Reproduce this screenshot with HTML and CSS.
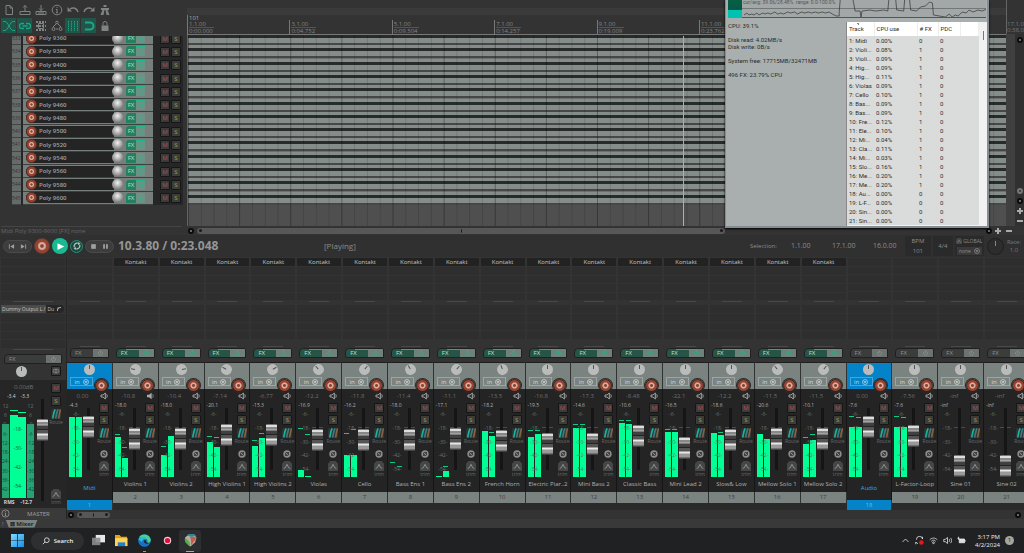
FILE: index.html
```html
<!DOCTYPE html>
<html lang="en">
<head>
<meta charset="utf-8">
<title>Mixer session</title>
<link rel="stylesheet" href="styles.css">
</head>
<body>
<svg class="defs" aria-hidden="true">
  <symbol id="i-new" viewBox="0 0 12 12"><path d="M3 1.5h4l2.5 2.500V10.500H3zM7 1.500V4h2.500"/></symbol>
  <symbol id="i-open" viewBox="0 0 12 12"><path d="M1 7.500h10v3H1zM6 7V1.500M4 3.500l2-2 2 2"/></symbol>
  <symbol id="i-save" viewBox="0 0 12 12"><path d="M1 7.500h10v3H1zM6 1v5.500M4 4.500l2 2 2-2M3 9h6"/></symbol>
  <symbol id="i-info" viewBox="0 0 12 12"><circle cx="6" cy="6" r="4.800"/><path d="M6 5.200v3.500M5 8.700h2M5 5.500h1M6 3v1"/></symbol>
  <symbol id="i-undo" viewBox="0 0 12 12"><path stroke-width="1.500" d="M3 5c3-2 7-1 8 3"/><path class="f" d="M.5 3v4.500H5z"/></symbol>
  <symbol id="i-redo" viewBox="0 0 12 12"><path stroke-width="1.500" d="M9 5c-3-2-7-1-8 3"/><path class="f" d="M11.500 3v4.500H7z"/></symbol>
  <symbol id="i-metro" viewBox="0 0 12 12"><path class="f" d="M4.500 1h3v2h-3zM2 4h8v2H2zM3.500 6h2L4.500 11h-3zM6.500 6h2l2 5h-3z"/></symbol>
  <symbol id="i-cross" viewBox="0 0 12 12"><path d="M0 1.500h2c3 0 5 9 8 9h2M0 10.500h2c3 0 5-9 8-9h2"/></symbol>
  <symbol id="i-link" viewBox="0 0 12 12"><path stroke-width="1.300" d="M5 3.500H3a2.500 2.500 0 000 5h2M7 3.500h2a2.500 2.500 0 010 5H7M3.500 6h5"/></symbol>
  <symbol id="i-group" viewBox="0 0 12 12"><path stroke-width="2" stroke-dasharray="2 1" d="M1 2h10M1 6h10M1 10h10"/><path d="M3.500 3.500h5v5h-5z"/></symbol>
  <symbol id="i-env" viewBox="0 0 12 12"><circle cx="6" cy="2.500" r="1.300"/><path d="M5 4L2 7M7 4l3 3"/><circle cx="2.500" cy="9" r="1.500"/><circle cx="9.500" cy="9" r="1.500"/><path d="M5 9h2"/></symbol>
  <symbol id="i-grid" viewBox="0 0 12 12"><path stroke-dasharray="1.500 .8" d="M1.500 1v10M4.500 1v10M7.500 1v10M10.500 1v10"/></symbol>
  <symbol id="i-snap" viewBox="0 0 12 12"><path stroke-width="2" d="M2 2.500h5a3.500 3.500 0 010 7H2"/></symbol>
  <symbol id="i-lock" viewBox="0 0 12 12"><path class="f" d="M2.500 5.500h7V11h-7z"/><path d="M4 5.500V3.500a2 2 0 014 0v2"/></symbol>
  <symbol id="i-prev" viewBox="0 0 12 12"><path class="f" d="M1.500 2H3v8H1.500zM10.500 2v8L4 6z"/></symbol>
  <symbol id="i-next" viewBox="0 0 12 12"><path class="f" d="M10.500 2H9v8h1.500zM1.500 2v8L8 6z"/></symbol>
  <symbol id="i-play" viewBox="0 0 12 12"><path class="f" d="M2 1.500l9 4.500-9 4.500z"/></symbol>
  <symbol id="i-loop" viewBox="0 0 12 12"><path stroke-width="1.800" d="M2.200 8A4.300 4.300 0 017 1.900M9.800 4A4.300 4.300 0 015 10.100"/><path class="f" d="M7 0l4 2-3 3zM5 12L1 10l3-3z"/></symbol>
  <symbol id="i-stop" viewBox="0 0 12 12"><path class="f" d="M2 2h8v8H2z"/></symbol>
  <symbol id="i-pause" viewBox="0 0 12 12"><path class="f" d="M2 2h3v8H2zM7 2h3v8H7z"/></symbol>
  <symbol id="i-power" viewBox="0 0 12 12"><path stroke-width="1.500" d="M4 3a4 4 0 104 0M6 1v5"/></symbol>
  <symbol id="i-down" viewBox="0 0 12 12"><circle stroke-width="1.500" cx="6" cy="6" r="5"/><path class="f" d="M3 4.500h6L6 9z"/></symbol>
  <symbol id="i-spk" viewBox="0 0 12 12"><path stroke-width="1.400" d="M1.500 4.500h3L8 1.500v9L4.500 7.500h-3zM10 3.500c1 1.500 1 3.500 0 5"/></symbol>
  <symbol id="i-spkon" viewBox="0 0 12 12"><path class="f" d="M1.500 4h3L8.500 1v10L4.500 8h-3z"/><path d="M10 3.500c1 1.500 1 3.500 0 5"/></symbol>
  <symbol id="i-route" viewBox="0 0 12 12"><path class="f dk" d="M1 0h11v12H0V2z"/><path class="r1" d="M2 11.500C3 8 3 4 5 .5"/><path class="r2" d="M5.500 11.500C6.500 8 6.500 4 8.500 .5"/><path class="r3" d="M9 11.500c1-3.500 1-7.500 2.500-11"/></symbol>
  <symbol id="i-phase" viewBox="0 0 12 12"><circle class="f" cx="6" cy="6" r="5.500"/><circle class="k" cx="6" cy="6" r="2.500"/><path class="k" d="M3 9l6-6"/></symbol>
  <symbol id="i-trim" viewBox="0 0 12 12"><path class="b" d="M0 3l3-3h6l3 3v9H0z"/><path d="M2 9l2-1 2-4 2 4 2 1"/></symbol>
  <symbol id="i-mono" viewBox="0 0 12 12"><circle cx="4.500" cy="6" r="3"/><circle cx="7.500" cy="6" r="3"/></symbol>
</svg>

<main class="app">
  <section class="arrange">
    <div class="tcp">
      <div class="toolbar" id="toolbar"></div>
      <div class="tracks"><div class="tracklist" id="tracklist"></div></div>
      <p class="hint">Midi Poly 9300-9600 [FX] none</p>
    </div>
    <div class="timeline">
      <div class="navstrip"></div>
      <div class="ruler" id="ruler"></div>
      <div class="lanes"><div class="lanelist" id="lanelist"></div></div>
      <div class="blank"></div>
      <div class="hscroll"><i class="dot"></i><div class="bar"><i></i><i class="mid"></i><i></i></div><i class="dot last"></i><b class="plus"></b></div>
      <div class="playhead"></div>
    </div>
    <div class="edge">
      <div class="edgeruler"><span>17.1.00</span><span>0:38.019</span></div>
      <div class="edgebody"><i class="dot"></i><span class="zoomers"><i class="dot soft"></i><i class="dot"></i><b class="plus"></b><b class="plus minus"></b></span></div>
      <div class="edgefoot"><b class="plus minus"></b></div>
    </div>

    <aside class="perf">
      <div class="graph">
        <div class="load"></div>
        <div class="plot"><span>cur/avg: 39.06/28.48%&nbsp; range: 0.0-100.0%</span>
          <svg viewBox="0 0 246 17" preserveAspectRatio="none"><path d="M0 8.500h246" opacity=".6"/><path d="M2 15l3-2 2 2 3-1 2 1 3-2 2 2 4-2 2 1 3-1 3 1 4-2 3 2 3-1 3 1 4-2 3 1 4-1 3 2 4-2 3 1 4-1 3 1 4-1 3 1 4-1 3 1 4-1 3 2 4 2h3V12l1-12M112 0l2 11h5l1 6 1-6 8-1 6 1 8-1 4 1 1-11M155 0l1 10 7 1 1-11M169 0l1 10 6 1 4-4 5-1 4-4 3 1 1 12 12 2 4-3 3 3 3-2 3 1 4-4 4 1 3-3 4 2 5-2 4 1 5-2"/></svg>
        </div>
      </div>
      <div class="perfbody">
        <div class="stats"><p>CPU: 39.1%</p><p>Disk read: 4.02MB/s<br>Disk write: 0B/s</p><p>System free: 17715MB/32471MB</p><p>496 FX: 23.79% CPU</p></div>
        <div class="tablebox">
          <table><thead><tr><th class="ct sorted">Track</th><th class="cc">CPU use</th><th class="cf"># FX</th><th class="cp">PDC</th><th></th></tr></thead><tbody id="perfrows"></tbody></table>
          <div class="vbar"><i></i></div>
        </div>
      </div>
    </aside>
  </section>

  <section class="transport">
    <div class="pill"><button aria-label="Go to start"><svg><use href="#i-prev"/></svg></button><button aria-label="Go to end"><svg><use href="#i-next"/></svg></button></div>
    <button class="rec big" aria-label="Record"></button>
    <button class="play" aria-label="Play"><svg><use href="#i-play"/></svg></button>
    <button class="loop" aria-label="Repeat"><svg><use href="#i-loop"/></svg></button>
    <div class="pill"><button aria-label="Stop"><svg><use href="#i-stop"/></svg></button><button aria-label="Pause"><svg><use href="#i-pause"/></svg></button></div>
    <output class="clock">10.3.80 / 0:23.048</output>
    <span class="state">[Playing]</span>
    <div class="selection"><span>Selection:</span><span>1.1.00</span><span>17.1.00</span><span>16.0.00</span></div>
    <div class="tbox bpm"><span>BPM</span><span>101</span></div>
    <div class="tbox sig">4/4</div>
    <div class="tbox glob"><span><svg><use href="#i-trim"/></svg>GLOBAL</span><button>none <svg><use href="#i-down"/></svg></button></div>
    <i class="rateknob"></i>
    <div class="rate"><span>Rate:</span><span>1.0</span></div>
  </section>

  <section class="mixer">
    <div class="master">
      <div class="slots"><i></i><i></i><i></i><i></i><i></i></div>
      <hr>
      <div class="slots sends"><span class="out"><em>Dummy Output L /</em> Du<b></b></span><i></i><i></i><i></i><i></i></div>
      <hr>
      <button class="fx"><span>FX</span><svg><use href="#i-power"/></svg></button>
      <div class="mpan"><i class="knob"></i><button class="sq" aria-label="Mono"><svg><use href="#i-mono"/></svg></button></div>
      <div class="mbody">
        <div class="mleft">
          <span class="vol">0.00dB</span>
          <div class="mpeaks"><span>-3.4</span><span>-3.3</span></div>
          <div class="mmeter">
            <div class="mscale side"><span>12</span><span>6</span><span>0-</span><span>6-</span><span>12-</span><span>18-</span><span>24-</span><span>30-</span><span>36-</span><span>42-</span></div>
            <div class="mbar"><i></i></div><div class="mbar two"><i></i></div>
            <div class="mscale side"><span>12</span><span>6</span><span>-0</span><span>-6</span><span>-12</span><span>-18</span><span>-24</span><span>-30</span><span>-36</span><span>-42</span></div>
            <div class="mcenter"><span>-18-</span><span>-30-</span><span>-42-</span><span>-54-</span></div>
          </div>
          <div class="mpeaks rms"><span>RMS</span><span>-12.7</span></div>
        </div>
        <div class="mfader"><input class="fader" type="range" min="0" max="80" value="60" aria-label="Master volume"></div>
        <div class="btns"><button class="sq m">M</button><button class="sq s">S</button><button class="ic yellow" aria-label="Route"><svg><use href="#i-route"/></svg></button><small>Route</small><span class="grow"></span><button class="ic" aria-label="Trim"><svg><use href="#i-trim"/></svg></button><small>trim</small></div>
      </div>
      <div class="mname"><svg><use href="#i-info"/></svg><span>MASTER</span></div>
    </div>
    <div class="stripwrap">
      <div class="strips" id="strips"></div>
      <div class="mixscroll"><i class="dot"></i><div class="bar"><i></i><i class="mid"></i><i></i></div><i class="dot last"></i></div>
    </div>
  </section>

  <nav class="docker"><span>!</span><button>⊠ Mixer</button></nav>
</main>

<footer class="taskbar">
  <button class="task" aria-label="Start"><svg viewBox="0 0 14 14"><defs><linearGradient id="w" x2="1" y2="1"><stop stop-color="#7fdcff"/><stop offset="1" stop-color="#1590e8"/></linearGradient></defs><path fill="url(#w)" d="M0 0h6.600v6.600H0zM7.400 0H14v6.600H7.400zM0 7.400h6.600V14H0zM7.400 7.400H14V14H7.400z"/></svg></button>
  <button class="search"><svg viewBox="0 0 10 10"><circle cx="6" cy="4" r="3"/><path d="M4 6L1 9"/></svg>Search</button>
  <button class="task" aria-label="Task view"><svg viewBox="0 0 14 14"><path fill="#e8e8e8" d="M4 1h10v8H4z"/><path fill="#8b8b8b" opacity=".9" d="M0 4h9v8H0z"/></svg></button>
  <button class="task" aria-label="Explorer"><svg viewBox="0 0 14 14"><path fill="#e0a21c" d="M0 1h5l1.500 2H13v3H0z"/><path fill="#ffd35a" d="M0 4.500h13.500V13H0z"/><path fill="#1f7fd0" d="M3 9h8v4H3z"/></svg></button>
  <button class="task run" aria-label="Edge"><svg viewBox="0 0 14 14"><circle cx="7" cy="7" r="6.800" fill="#1673c4"/><path fill="#4fd08a" d="M1 4C3-.5 11-1 13.500 5c.8 3-1 4.500-3.500 4.500C12 5 6 2 1 4z"/><path fill="#2bb8e0" d="M.5 6C2 2 9 2 9.500 6 7 4.500 4 6 4.500 9z"/><path fill="#202224" d="M7.500 6.500c-2 1-1 4 2 4 1.500 0 2.800-.6 3.500-1-1 .2-3 .2-4-.7-.8-.8-.6-1.600-.5-2z"/></svg></button>
  <button class="task" aria-label="Recorder"><svg viewBox="0 0 14 14"><circle cx="7" cy="7" r="4" fill="#f3c9d3"/><circle cx="7" cy="7" r="2.800" fill="#d8123f"/></svg></button>
  <button class="task active" aria-label="Reaper"><svg viewBox="0 0 14 14"><path fill="#b9aea4" d="M1 4l4-3.500h6L13.500 4 12 9l-5 4.500L2 9z"/><path fill="#c2604f" d="M6 3c4-1 7 0 7 2l-5.500 7.500c0-4 .5-7-1.500-9.500z"/><path fill="#55b04c" d="M1 4.500C4 5 7 9 6.500 13.500 3 11 0 8 1 4.500z"/><path fill="#2b8a95" d="M3 1.500L5 0h6l2 2-5 1z"/></svg></button>
  <div class="tray">
    <svg viewBox="0 0 12 12"><path d="M2 8l4-4 4 4"/></svg>
    <svg viewBox="0 0 12 12"><path d="M2 5a4 4 0 018-1V1M1 11V8a4 4 0 003 2"/><circle cx="8.500" cy="8.500" r="3" fill="#f01515" stroke="none"/></svg>
    <svg viewBox="0 0 12 12"><path d="M1 5c3-3 7-3 10 0M3 7c2-2 4-2 6 0"/><circle cx="6" cy="9" r="1.200"/></svg>
    <svg viewBox="0 0 12 12"><path d="M1 4.500h2L6 2v8L3 7.500H1zM8 4c1 1 1 3 0 4M10 2.500c2 2 2 5 0 7"/></svg>
    <svg viewBox="0 0 12 12"><path fill="#ddd" d="M3 4h7v5H3zM11 5.500v2M2 1v4M.5 3h3"/></svg>
    <div class="date"><span>3:17 PM</span><span>4/2/2024</span></div>
    <span class="badge">1</span>
  </div>
</footer>
<script src="app.js"></script>
</body>
</html>
```
FILE: app.js
```js
const el = id => document.getElementById(id);
const icon = name => `<svg><use href="#i-${name}"/></svg>`;

const tools = ['new', 'open', 'save', 'info', 'undo', 'redo', 'metro', 'cross', 'link', 'group', 'env', 'grid', 'snap', 'lock'];
const lit = ['cross', 'link', 'grid', 'snap'];
el('toolbar').innerHTML = tools.map(t =>
  `<button class="${lit.includes(t) ? 'on' : ''}" aria-label="${t}">${icon(t)}</button>`).join('');

el('tracklist').innerHTML = Array.from({ length: 13 }, (_, i) => `
  <div class="track"><span class="idx">${533 + i}</span>
    <div class="tpanel"><div class="tname"><button class="rec" aria-label="Arm"></button><span>Poly ${9360 + i * 20}</span></div>
      <i class="ball"></i><button class="tfx">FX</button><button class="tpow" aria-label="Bypass">${icon('power')}</button></div>
    <div class="tms"><button class="sq m">M</button><button class="sq s">S</button></div>
  </div>`).join('');

const times = ['0:00.000', '0:04.752', '0:09.504', '0:14.257', '0:19.009', '0:23.762'];
el('ruler').innerHTML = times.map((t, i) =>
  `<div>${i ? '' : '<b>101</b>'}<span>${i * 2 + 1}.1.00</span><span>${t}</span></div>`).join('');

el('lanelist').innerHTML = '<div class="lane"></div>'.repeat(13);

const perf = [['Midi', '0.00', 0], ['Violi...', '0.08', 1], ['Violi...', '0.09', 1], ['Hig...', '0.09', 1], ['Hig...', '0.11', 1],
  ['Violas', '0.09', 1], ['Cello', '0.10', 1], ['Bas...', '0.09', 1], ['Bas...', '0.09', 1], ['Fre...', '0.12', 1], ['Ele...', '0.10', 1],
  ['Mi...', '0.04', 1], ['Cla...', '0.11', 1], ['Mi...', '0.03', 1], ['Slo...', '0.16', 1], ['Me...', '0.20', 1], ['Me...', '0.20', 1],
  ['Au...', '0.00', 0], ['L-F...', '0.00', 0], ['Sin...', '0.00', 0], ['Sin...', '0.00', 0]];
el('perfrows').innerHTML = perf.map(([n, c, f], i) =>
  `<tr><td>${i + 1}: ${n}</td><td>${c}%</td><td>${f}</td><td>0</td><td></td></tr>`).join('');

// name, volume, peak, left level, right level, left hold, right hold, fader, pan angle
const strips = [
  ['Midi', '0.00', '-4.3', 60, 60, 0, 0, 39, 0],
  ['Violins 1', '-10.8', '-18.0', 40, 19, 42, 29, 27, -80],
  ['Violins 2', '-10.4', '-18.0', 22, 41, 30, 0, 27, 80],
  ['High Violins 1', '-7.14', '-20.1', 35, 30, 40, 39, 31, -60],
  ['High Violins 2', '-6.77', '-15.3', 31, 39, 36, 43, 31, 60],
  ['Violas', '-12.2', '-16.9', 7, 1, 48, 42, 26, -40],
  ['Cello', '-11.8', '-16.2', 22, 22, 43, 47, 26, 40],
  ['Bass Ens 1', '-11.4', '-18.0', 0, 0, 14, 10, 26, -30],
  ['Bass Ens 2', '-11.1', '-17.1', 1, 6, 0, 10, 27, 40],
  ['French Horn', '-13.5', '-18.2', 46, 41, 0, 44, 25, -20],
  ['Electric Piar..2', '-16.8', '-19.5', 40, 43, 46, 46, 22, 0],
  ['Mini Bass 2', '-17.3', '-14.6', 49, 49, 52, 52, 22, 0],
  ['Classic Bass', '-8.48', '-10.6', 54, 53, 56, 56, 30, 0],
  ['Mini Lead 2', '-22.1', '-16.5', 45, 45, 47, 47, 18, 0],
  ['Slow& Low', '-12.2', '-18.6', 44, 42, 0, 44, 26, 0],
  ['Mellow Solo 1', '-11.5', '-20.6', 43, 38, 0, 0, 27, -40],
  ['Mellow Solo 2', '-11.5', '-10.1', 33, 37, 39, 42, 27, 40],
  ['Audio', '0.00', '-7.6', 50, 50, 60, 59, 39, 0],
  ['L-Factor-Loop', '-7.56', '-7.6', 50, 50, 60, 59, 30, 0],
  ['Sine 01', '-inf', '-inf', 0, 0, 0, 0, 0, 0],
  ['Sine 02', '-inf', '-inf', 0, 0, 0, 0, 0, 0]];
const bar = (level, hold) => `<div class="mt">${hold ? `<b style="bottom:${hold}px"></b>` : ''}<i style="height:${level}px"></i></div>`;
el('strips').innerHTML = strips.map(([name, vol, peak, l, r, hl, hr, fader, pan], i) => {
  const loaded = i > 0 && i < 17;
  return `<article class="strip ${i === 0 || i === 17 ? 'sel' : ''}">
    <div class="slots">${loaded ? '<span>Kontakt</span>' : '<i></i>'}<i></i><i></i><i></i><i></i></div><hr>
    <div class="slots sends"><i></i><i></i><i></i><i></i></div><hr>
    <button class="fx ${loaded ? 'on' : ''}"><span>FX</span>${icon('power')}</button>
    <div class="head"><i class="knob" style="rotate:${pan}deg"></i><button class="in">in ${icon('down')}</button><button class="rec" aria-label="Arm"></button></div>
    <div class="body">
      <div class="left"><span class="vol">${vol}</span>
        <div class="faders"><div class="meter"><span class="pk">${peak}</span>${bar(l, hl)}${bar(r, hr)}
          <div class="scale"><span>-6-</span><span>-18-</span><span>-30-</span><span>-42-</span><span>-54-</span></div></div>
          <input class="fader" type="range" min="0" max="50" value="${fader}" aria-label="${name} volume"></div></div>
      <div class="btns"><button class="spk" aria-label="Monitor">${icon(i === 1 ? 'spkon' : 'spk')}</button><button class="sq m">M</button><button class="sq s">S</button>
        <button class="ic" aria-label="Route">${icon('route')}</button><small>Route</small>
        <button class="ph" aria-label="Phase">${icon('phase')}</button><button class="ic" aria-label="Trim">${icon('trim')}</button><small>trim</small></div>
    </div>
    <div class="name">${name}</div><div class="num">${i + 1}</div>
  </article>`;
}).join('');
```
FILE: styles.css
```css
* { box-sizing: border-box; }
body { margin: 0; height: 100vh; overflow: hidden; display: flex; flex-direction: column; background: #333; color: #8c8c8c; font: 6px/8px "Open Sans", "Noto Sans", sans-serif; }
p { margin: 0; }
button { border: 0; padding: 0; margin: 0; background: none; color: inherit; font: inherit; display: block; }
svg { display: block; width: 6px; height: 6px; fill: none; stroke: currentColor; }
svg .f { fill: currentColor; stroke: none; }
.defs { position: absolute; width: 0; height: 0; }
.app { flex: 1; display: flex; flex-direction: column; min-height: 0; }

/* Arrange view */
.arrange { position: relative; display: flex; height: 235px; }
.tcp { width: 187px; display: flex; flex-direction: column; }
.toolbar { display: grid; grid-template-columns: repeat(7, 16px); grid-auto-rows: 16px; padding: 2px 1px; height: 36px; }
.toolbar button { display: grid; place-items: center; margin: 0 1px 1px 0; color: #7f8383; }
.toolbar svg { width: 12px; height: 12px; }
.toolbar .on { background: #20554a; color: #1fa585; }
.tracks { height: 169px; margin-left: 12px; width: 171px; overflow: hidden; display: flex; align-items: flex-end; background: #262626; }
.tracklist { flex: 1; height: 173px; display: grid; grid-template-rows: repeat(13, minmax(0, 1fr)); }
.track { display: flex; min-height: 0; }
.idx { width: 9px; background: #656b69; color: #333; font-size: 5px; line-height: 12px; border-bottom: 1px solid #444; }
.tpanel { width: 130px; margin-left: 2px; background: #777f7d; border-bottom: 1px solid #3c403f; display: flex; align-items: center; padding-left: 3px; }
.tname { width: 88px; height: 11px; border-radius: 6px 0 0 6px; background: #242424; display: flex; align-items: center; gap: 2px; color: #a0a0a0; font-weight: 600; }
.rec { flex: none; width: 11px; height: 11px; border-radius: 50%; border: 1px solid #5f2f24; background: radial-gradient(circle closest-side, #8f402f 18%, #d4b0a5 34% 46%, #98432f 66%); }
.ball { width: 11px; height: 11px; border-radius: 50%; background: radial-gradient(circle at 50% 35%, #f0f0f0, #777 75%); margin-left: -2px; }
.tfx { width: 10px; height: 10px; margin-left: 3px; background: #268060; border-radius: 3px 0 0 0; color: #a8e0cc; line-height: 10px; }
.tpow { width: 9px; height: 10px; background: #6f9085; border-top: 1px solid #1db98a; color: #30b58c; display: grid; place-items: center; }
.tms { display: flex; align-items: center; gap: 1px; margin-left: 7px; }
.sq { width: 10px; height: 10px; background: #3c3c3c; border: 1px solid #161616; border-radius: 1px; line-height: 8px; text-align: center; display: grid; place-items: center; }
.m { color: #b84c4c; }
.s { color: #a0a034; }
.hint { margin: 21px 5px 0 1px; border-top: 1px solid #444; color: #666; line-height: 8px; }
.timeline { position: relative; flex: 1; min-width: 0; display: flex; flex-direction: column; --grid: linear-gradient(90deg, #0003 1px, #0000 1px) 0 0 / 6.25% 100%, linear-gradient(90deg, #0002 1px, #0000 1px) 0 0 / 1.5625% 100%; }
.navstrip { height: 7px; margin-top: 8px; background: #3a3a3a; }
.ruler { height: 20px; display: grid; grid-template-columns: repeat(8, 1fr); border-bottom: 1px solid #777; color: #858585; overflow: hidden; }
.ruler div { border-left: 1px solid #777; display: flex; flex-direction: column; justify-content: flex-end; line-height: 6px; padding-left: 1px; margin-top: 5px; }
.ruler div:first-child { margin-top: 0; }
.ruler b { color: #aaa; font-weight: 400; }
.ruler span:last-child { width: 25px; border-top: 1px solid #555; }
.lanes { height: 170px; overflow: hidden; display: flex; align-items: flex-end; border-left: 1px solid #39796a; }
.lanelist { flex: 1; height: 173px; display: grid; grid-template-rows: repeat(13, minmax(0, 1fr)); }
.lane { background: var(--grid), linear-gradient(#858d8b 0 3px, #272b29 3px 6px, #858d8b 6px 11px, #474747 11px 13px, #6b7170 13px); }
.blank { height: 21px; background: var(--grid), #4f4f4f; border-left: 1px solid #39796a; }
.hscroll { height: 9px; display: flex; align-items: center; gap: 3px; padding: 0 5px 0 1px; }
.bar { flex: 1; height: 6px; border-radius: 3px; background: #575757; display: flex; justify-content: space-between; align-items: center; padding: 0 2px; }
.hscroll .bar { flex: 0 0 528px; }
.bar i { width: 3px; height: 3px; border-radius: 50%; background: #1a1a1a; }
.bar .mid { width: 1px; height: 4px; }
.dot { flex: none; width: 6px; height: 6px; border-radius: 50%; background: #888; border: 2px solid #0c0c0c; }
.dot.last { margin-left: auto; }
.dot.soft { border-color: #777; background: #333; }
.plus { width: 6px; height: 6px; background: linear-gradient(#aaa, #aaa) 50% 50% / 6px 2px no-repeat, linear-gradient(#aaa, #aaa) 50% 50% / 2px 6px no-repeat; }
.minus { background: linear-gradient(#aaa, #aaa) 50% 50% / 6px 2px no-repeat; }
.playhead { position: absolute; top: 36px; bottom: 9px; left: 60.6%; width: 1px; background: #d8ae3c; }
.edge { width: 18px; display: flex; flex-direction: column; overflow: hidden; }
.edgeruler { height: 34px; padding-top: 21px; display: flex; flex-direction: column; line-height: 6px; border-left: 1px solid #666; color: #777; }
.edgebody { flex: 1; border-left: 9px solid #404040; display: flex; flex-direction: column; align-items: center; justify-content: space-between; padding: 3px 0 2px; background: #303030; }
.zoomers { display: flex; flex-direction: column; align-items: center; gap: 4px; }
.edgefoot { height: 9px; display: flex; align-items: center; }

/* Performance meter window */
.perf { position: absolute; left: 725px; top: 0; width: 264px; height: 228px; background: #a8afae; border: 1px solid #858d93; border-width: 0 2px 2px 1px; display: flex; flex-direction: column; font-family: Roboto, sans-serif; color: #2c2c2c; box-shadow: 0 1px 2px #000; }
.graph { display: flex; height: 18px; padding: 0 1px 0 2px; }
.load { width: 14px; background: linear-gradient(#066045, #065845 10px, #00c2b0 10px); }
.plot { flex: 1; position: relative; border-bottom: 1px solid #555; background: #a1a8a7; }
.plot span { position: absolute; left: 1px; top: -2px; font-size: 5px; color: #555; }
.plot svg { width: 100%; height: 17px; color: #333; stroke-width: .7; }
.perfbody { flex: 1; display: flex; justify-content: space-between; padding-top: 4px; }
.stats { padding-left: 2px; display: flex; flex-direction: column; gap: 7px; line-height: 7px; }
.tablebox { width: 141px; display: flex; background: #f1f1f1; border-left: 1px solid #888; }
table { width: 132px; height: 203px; border-collapse: collapse; table-layout: fixed; background: #dadcdb; }
th { background: #fff; font-weight: 400; text-align: left; height: 14px; padding: 0 0 0 2px; border-right: 1px solid #eee; }
td { padding: 0 0 0 2px; line-height: 6px; white-space: nowrap; }
.ct { width: 27px; } .cc { width: 43px; } .cf { width: 21px; } .cp { width: 22px; }
.sorted { background: linear-gradient(45deg, #0000 50%, #888 50%) 10px 1px / 2px 2px no-repeat, #fff; }
.vbar { flex: 1; padding: 9px 0 0 4px; }
.vbar i { display: block; width: 1px; height: 9px; background: #777; }

/* Transport */
.transport { height: 22px; display: flex; align-items: center; gap: 2px; padding: 0 3px; background: #303030; }
.pill { width: 29px; height: 13px; border-radius: 7px; background: #3d3d3d; border: 1px solid #4a4a4a; display: flex; justify-content: space-evenly; align-items: center; color: #a0a0a0; }
.pill svg { width: 7px; height: 7px; }
.big { width: 16px; height: 16px; border-color: #6a3b30; }
.play, .loop { flex: none; width: 16px; height: 16px; border-radius: 50%; background: #19ba92; color: #fff; display: grid; place-items: center; }
.play svg { width: 9px; height: 9px; }
.loop { width: 13px; height: 13px; background: #1d4a40; border: 1px solid #2b8e74; color: #b5c6c0; }
.loop svg { width: 8px; height: 8px; }
.clock { font-size: 12px; font-weight: 700; color: #959595; line-height: 20px; margin-left: 2px; width: 204px; white-space: nowrap; }
.state { font-size: 8px; flex: 1; }
.selection { display: flex; gap: 14px; margin-right: 3px; }
.selection span { min-width: 27px; }
.selection span + span { font-size: 7px; }
.tbox { height: 20px; background: #2a2a2a; display: flex; flex-direction: column; align-items: center; justify-content: space-evenly; line-height: 8px; }
.bpm { width: 26px; } .sig { width: 20px; } .glob { width: 29px; }
.glob span, .glob button { display: flex; align-items: center; gap: 1px; font-size: 5px; }
.glob button { background: #3a3a3a; padding: 0 2px; gap: 3px; }
.glob .b { fill: none; }
.rateknob { width: 17px; height: 17px; margin: 0 1px; border-radius: 50%; border: 1px solid #1e1e1e; background: linear-gradient(#888, #888) 50% 2px / 1px 5px no-repeat, #2d2d2d; }
.rate { display: flex; flex-direction: column; align-items: center; color: #777; }

/* Mixer */
.mixer { display: flex; height: 262px; }
.slots { display: grid; gap: 1px; padding: 1px 1px 0; height: 43px; grid-auto-rows: 1fr; }
.slots i, .slots span { background: #2e2e2e; border-radius: 1px; line-height: 8px; text-align: center; }
.slots span { background: #222; color: #c4c4c4; }
.slots.sends { height: 35px; padding-top: 0; }
hr { flex: none; width: 20px; height: 1px; border: 0; background: #484848; margin: 1px auto; }
.fx { flex: none; height: 10px; margin: 0 4px 0 3px; display: flex; align-items: stretch; border: 1px solid #202020; border-radius: 4px 2px 0 2px; background: #3a3d3c; color: #8c9391; line-height: 8px; overflow: hidden; text-align: left; }
.fx span { flex: 1; padding-left: 4px; }
.fx svg { width: 15px; height: 8px; padding: 1px 4px; background: #6c7371; }
.fx.on { background: linear-gradient(90deg, #0000 25%, #19b487 25%) 0 0 / 100% 1px no-repeat, #265446; color: #c0e0d4; }
.fx.on svg { background: linear-gradient(90deg, #19b487 60%, #0000 60%) 0 0 / 100% 1px no-repeat, #6f817a; color: #23b58a; }
.stripwrap { flex: 1; min-width: 0; overflow: hidden; display: flex; flex-direction: column; }
.strips { width: calc(100% + 6px); height: 253px; display: grid; grid-template-columns: repeat(21, minmax(0, 1fr)); background: #2a2a2a; }
.strip { display: flex; flex-direction: column; background: #333; min-width: 0; }
.strip .slots { flex: none; }
.strip .fx { margin-top: 1px; margin-bottom: 4px; }
.strip .sends { margin-top: 2px; height: 34px; }
.strip .sends + hr { margin: 7px auto 0; }
.head { flex: none; position: relative; height: 27px; background: #7b8381; border-right: 1px solid #303332; border-top: 1px solid #1e1e1e; padding-top: 1px; }
.sel .head { background: #0583c8; }
.knob { display: block; width: 11px; height: 11px; border-radius: 50%; background: linear-gradient(#555, #555) 50% 1px / 1px 4px no-repeat, #b9bcbb; margin: 0 auto; }
.in { width: 23px; height: 9px; margin: 2px 0 0 3px; border: 1px solid #fff4; color: #fffa; display: flex; align-items: center; justify-content: center; gap: 3px; }
.head .rec { position: absolute; right: 4px; bottom: -3px; width: 13px; height: 13px; border-color: #332522; box-shadow: 0 0 0 1px #2a2a2a; }
.body { flex: none; height: 89px; background: #242424; border-right: 1px solid #151515; display: flex; padding: 3px 4px 0 2px; }
.left { flex: 1; display: flex; flex-direction: column; }
.vol { text-align: center; color: #6e6e6e; line-height: 8px; padding-right: 2px; }
.faders { flex: 1; display: flex; justify-content: space-between; align-items: flex-end; padding-bottom: 1px; }
.meter { position: relative; width: 14px; height: 75px; display: flex; align-items: flex-end; gap: 1px; }
.pk { position: absolute; left: 0; top: 0; line-height: 6px; font-size: 5px; color: #b0b0b0; white-space: nowrap; }
.mt { position: relative; width: 6px; display: flex; }
.mt i { flex: 1; background: #00ff95; }
.mt b { position: absolute; left: 0; right: 1px; height: 1px; background: #10c982; }
.scale { position: absolute; inset: 9px 0 5px; display: flex; flex-direction: column; justify-content: space-between; text-align: center; font-size: 5px; line-height: 6px; color: #66756d; }
.fader { appearance: none; writing-mode: vertical-lr; direction: rtl; width: 11px; height: 72px; margin: 0 4px 0 0; background: linear-gradient(#151515, #151515) 50% 3px / 3px 62px no-repeat, linear-gradient(#4a4a4a, #4a4a4a) 50% 22px / 11px 1px no-repeat; }
.fader::-webkit-slider-thumb { appearance: none; width: 11px; height: 22px; border-radius: 1px; border: 0; background: linear-gradient(#777 0 1px, #ddd 1px 3px, #888 3px 5px, #bbb 6px, #404040 7px 10px, #222 10px 11px, #555 11px 14px, #e8e8e8 15px 16px, #999 17px 20px, #444 21px); }
.btns { width: 12px; display: flex; flex-direction: column; align-items: center; }
.btns small { font-size: 5px; line-height: 7px; color: #6a6a6a; }
.spk svg { width: 8px; height: 8px; margin-bottom: 3px; color: #aaa; }
.btns .m { margin-bottom: 2px; }
.btns .s { margin-bottom: 3px; }
.ic svg { width: 10px; height: 10px; color: #9a9a9a; }
.b { fill: #454747; stroke: none; }
.dk { color: #2d3434; }
.r1 { stroke: #18b59a; stroke-width: 2; } .r2 { stroke: #3d7c86; stroke-width: 2; } .r3 { stroke: #8a6238; stroke-width: 2; }
.ph svg { width: 8px; height: 8px; margin: 5px 0 3px; color: #8c8c8c; }
.k { stroke: #222; }
.name { flex: none; height: 14px; background: #242424; border-right: 1px solid #151515; text-align: center; line-height: 12px; color: #b0b0b0; white-space: nowrap; }
.num { flex: none; height: 11px; background: #7b8381; border-right: 1px solid #303332; text-align: center; line-height: 11px; color: #3a3e3d; }
.strip::after { content: ""; flex: 1; background: #2a2a2a; }
.sel .name { height: 22px; line-height: 20px; color: #3da5dc; }
.sel .num { height: 10px; line-height: 10px; background: #0583c8; color: #54c0f5; }
.mixscroll { height: 9px; display: flex; align-items: center; gap: 3px; padding: 0 3px 0 1px; }
.mixscroll .bar { flex: 0 0 33px; }

.master { width: 67px; flex: none; display: flex; flex-direction: column; border-right: 1px solid #252525; }
.master hr { width: 40px; }
.master .slots.sends { margin-top: 2px; height: 43px; }
.slots .out { background: #262626; display: flex; align-items: center; white-space: nowrap; margin-right: 1px; border-radius: 0 4px 4px 0; font-size: 5px; }
.out em { background: #4b4b4b; font-style: normal; padding: 0 1px; margin-right: 1px; }
.out b { width: 4px; height: 4px; border-left: 1px solid #aaa; border-top: 1px solid #aaa; border-radius: 3px 0 0; margin-left: 3px; }
.master .fx { margin: 3px 4px 0; }
.mpan { flex: none; height: 16px; background: #333; display: flex; justify-content: space-between; padding: 2px 5px 0 16px; }
.mpan .knob { margin: 0; }
.mpan .sq svg { width: 8px; height: 8px; color: #999; }
.mbody { flex: 1; background: #262626; display: flex; padding: 3px 4px 2px 2px; }
.mleft { width: 32px; display: flex; flex-direction: column; }
.mleft .vol { padding-left: 12px; white-space: nowrap; }
.mpeaks { display: flex; justify-content: space-evenly; color: #d0d0d0; font-size: 5px; line-height: 10px; }
.rms { font-weight: 700; line-height: 8px; white-space: nowrap; gap: 4px; }
.mmeter { position: relative; height: 97px; display: flex; align-items: stretch; justify-content: space-between; }
.mscale { width: 7px; display: flex; flex-direction: column; justify-content: space-between; font-size: 5px; line-height: 6px; text-align: center; color: #66756d; padding: 2px 0 6px; background: linear-gradient(#0000 23px, #25a473 23px); white-space: nowrap; }
.mscale span:nth-child(n+4) { color: #124a37; }
.mbar { width: 8px; display: flex; align-items: flex-end; border-top: 1px solid #0000; }
.mbar i { flex: 1; height: 83px; background: #00ff95; box-shadow: 0 -4px #262626, 0 -5px #00ff95; }
.mbar.two i { height: 81px; }
.mcenter { position: absolute; inset: 25px 0 9px; display: flex; flex-direction: column; justify-content: space-between; text-align: center; font-size: 5px; line-height: 6px; color: #0a6040; }
.mfader { flex: 1; padding: 16px 0 0 3px; }
.mfader .fader { height: 102px; margin: 0; background: linear-gradient(#151515, #151515) 50% 0 / 3px 100% no-repeat; }
.mbody .btns .m { margin-bottom: 3px; }
.yellow { --third: #d9a520; }
.yellow .r2 { stroke: #c8c040; } .yellow .r3 { stroke: #d9a520; }
.grow { flex: 1; }
.mname { flex: none; height: 11px; background: #3a3a3a; display: flex; align-items: center; gap: 17px; padding-left: 1px; color: #a0a0a0; }
.mname svg { width: 9px; height: 9px; }

.docker { height: 9px; background: #393939; display: flex; gap: 2px; padding-left: 2px; align-items: center; }
.docker button { height: 8px; width: 32px; background: #7b8381; clip-path: polygon(0 0, 100% 0, 90% 100%, 10% 100%); color: #262626; font-weight: 700; }

/* Taskbar */
.taskbar { height: 25px; background: #202123; display: flex; align-items: center; padding: 0 10px 0 6px; color: #f0f0f0; }
.task { position: relative; width: 22px; height: 22px; display: grid; place-items: center; margin-right: 1px; }
.task svg { width: 13px; height: 13px; stroke: none; }
.active { background: #2d2e30; border-radius: 3px; }
.run::after, .active::after { content: ""; position: absolute; bottom: 0; width: 3px; height: 1px; background: #999; }
.active::after { width: 8px; background: #aaa; }
.search { width: 53px; height: 18px; border-radius: 9px; background: #2e2f31; display: flex; align-items: center; justify-content: center; gap: 4px; margin: 0 3px 0 2px; font-weight: 600; }
.search svg { width: 8px; height: 8px; }
.tray { margin-left: auto; display: flex; align-items: center; gap: 5px; }
.tray svg { width: 9px; height: 9px; }
.date { display: flex; flex-direction: column; text-align: right; width: 29px; }
.badge { width: 9px; height: 9px; border-radius: 50%; background: #a5a5a0; color: #222; text-align: center; line-height: 9px; }
```
